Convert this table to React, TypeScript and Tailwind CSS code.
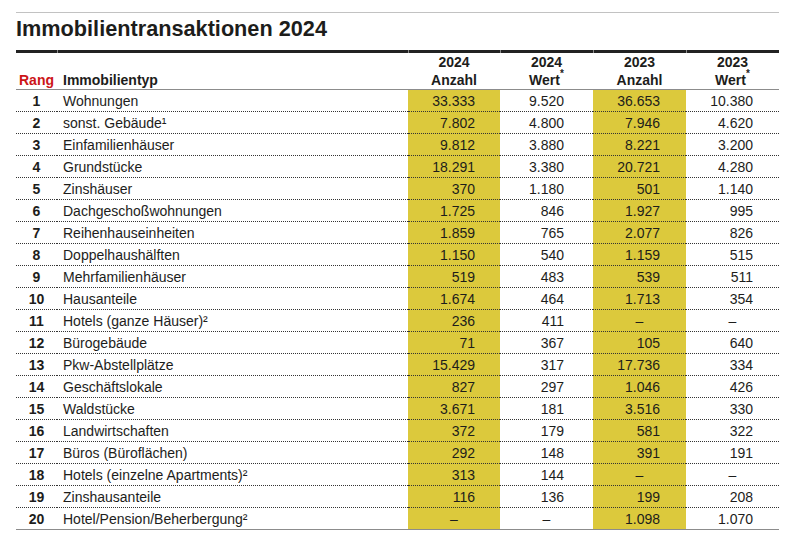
import React from 'react';

type Row = {
  rang: number;
  typ: string;
  a24: string;
  w24: string;
  a23: string;
  w23: string;
};

const rows: Row[] = [
  { rang: 1, typ: 'Wohnungen', a24: '33.333', w24: '9.520', a23: '36.653', w23: '10.380' },
  { rang: 2, typ: 'sonst. Gebäude¹', a24: '7.802', w24: '4.800', a23: '7.946', w23: '4.620' },
  { rang: 3, typ: 'Einfamilienhäuser', a24: '9.812', w24: '3.880', a23: '8.221', w23: '3.200' },
  { rang: 4, typ: 'Grundstücke', a24: '18.291', w24: '3.380', a23: '20.721', w23: '4.280' },
  { rang: 5, typ: 'Zinshäuser', a24: '370', w24: '1.180', a23: '501', w23: '1.140' },
  { rang: 6, typ: 'Dachgeschoßwohnungen', a24: '1.725', w24: '846', a23: '1.927', w23: '995' },
  { rang: 7, typ: 'Reihenhauseinheiten', a24: '1.859', w24: '765', a23: '2.077', w23: '826' },
  { rang: 8, typ: 'Doppelhaushälften', a24: '1.150', w24: '540', a23: '1.159', w23: '515' },
  { rang: 9, typ: 'Mehrfamilienhäuser', a24: '519', w24: '483', a23: '539', w23: '511' },
  { rang: 10, typ: 'Hausanteile', a24: '1.674', w24: '464', a23: '1.713', w23: '354' },
  { rang: 11, typ: 'Hotels (ganze Häuser)²', a24: '236', w24: '411', a23: '–', w23: '–' },
  { rang: 12, typ: 'Bürogebäude', a24: '71', w24: '367', a23: '105', w23: '640' },
  { rang: 13, typ: 'Pkw-Abstellplätze', a24: '15.429', w24: '317', a23: '17.736', w23: '334' },
  { rang: 14, typ: 'Geschäftslokale', a24: '827', w24: '297', a23: '1.046', w23: '426' },
  { rang: 15, typ: 'Waldstücke', a24: '3.671', w24: '181', a23: '3.516', w23: '330' },
  { rang: 16, typ: 'Landwirtschaften', a24: '372', w24: '179', a23: '581', w23: '322' },
  { rang: 17, typ: 'Büros (Büroflächen)', a24: '292', w24: '148', a23: '391', w23: '191' },
  { rang: 18, typ: 'Hotels (einzelne Apartments)²', a24: '313', w24: '144', a23: '–', w23: '–' },
  { rang: 19, typ: 'Zinshausanteile', a24: '116', w24: '136', a23: '199', w23: '208' },
  { rang: 20, typ: 'Hotel/Pension/Beherbergung²', a24: '–', w24: '–', a23: '1.098', w23: '1.070' },
];

const Zahl = ({ value, pr }: { value: string; pr: string }) =>
  value === '–' ? (
    <span className="block text-center">–</span>
  ) : (
    <span className={`block text-right ${pr}`}>{value}</span>
  );

const Kopf = ({ jahr, label, stern, w }: { jahr: string; label: string; stern?: boolean; w: string }) => (
  <div className={`${w} text-center`}>
    <div className="h-[18px]">{jahr}</div>
    <div className="h-[18px]">
      {stern ? (
        <span className="relative pr-[4px]">
          {label}
          <span className="absolute right-0 -top-[3px] text-[10px] leading-none">*</span>
        </span>
      ) : (
        label
      )}
    </div>
  </div>
);

const App = () => {
  return (
    <div className="w-[800px] h-[536px] overflow-hidden bg-white pl-[16px] pt-[12px] font-['Liberation_Sans',Arial,sans-serif] text-[#1d1d1b]">
      <div className="w-[763px]">
        <div className="h-px bg-[#c2c2c2]"></div>
        <h1 className="mt-[3px] text-[21.7px] font-bold leading-[26px] text-[#1d1d1b]">
          Immobilientransaktionen 2024
        </h1>

        {/* dicke Linie mit kleinen Spaltenfugen */}
        <div className="mt-[8px] flex h-[3px] gap-px bg-[#8a8a8a]">
          <div className="w-[41px] bg-[#222]"></div>
          <div className="w-[350px] bg-[#222]"></div>
          <div className="w-[91px] bg-[#222]"></div>
          <div className="w-[92px] bg-[#222]"></div>
          <div className="w-[92px] bg-[#222]"></div>
          <div className="w-[92px] bg-[#222]"></div>
        </div>

        <div className="flex h-[37px] items-start border-b border-[#8c8c8c] text-[14px] font-bold leading-[18px]">
          <div className="mt-[18px] h-[18px] w-[41px] text-center text-[#cc1518]">Rang</div>
          <div className="mt-[18px] h-[18px] w-[351px] pl-[6px]">Immobilientyp</div>
          <Kopf w="w-[92px]" jahr="2024" label="Anzahl" />
          <Kopf w="w-[93px]" jahr="2024" label="Wert" stern />
          <Kopf w="w-[93px]" jahr="2023" label="Anzahl" />
          <Kopf w="w-[93px]" jahr="2023" label="Wert" stern />
        </div>

        {rows.map((row, i) => {
          const last = i === rows.length - 1;
          const line = last
            ? 'border-b border-solid border-[#8c8c8c]'
            : 'border-b border-dotted border-[#333]';
          const cell = `h-[22px] pt-[2px] leading-[19px] ${line}`;
          return (
            <div key={row.rang} className="flex text-[14px]">
              <div className={`${cell} w-[41px] text-center font-bold`}>{row.rang}</div>
              <div className={`${cell} w-[351px] pl-[6px]`}>{row.typ}</div>
              <div className={`${cell} w-[92px] bg-[#dcc93c]`}>
                <Zahl value={row.a24} pr="pr-[25px]" />
              </div>
              <div className={`${cell} w-[93px]`}>
                <Zahl value={row.w24} pr="pr-[29px]" />
              </div>
              <div className={`${cell} w-[93px] bg-[#dcc93c]`}>
                <Zahl value={row.a23} pr="pr-[26px]" />
              </div>
              <div className={`${cell} w-[93px]`}>
                <Zahl value={row.w23} pr="pr-[26px]" />
              </div>
            </div>
          );
        })}
      </div>
    </div>
  );
};

export default App;
